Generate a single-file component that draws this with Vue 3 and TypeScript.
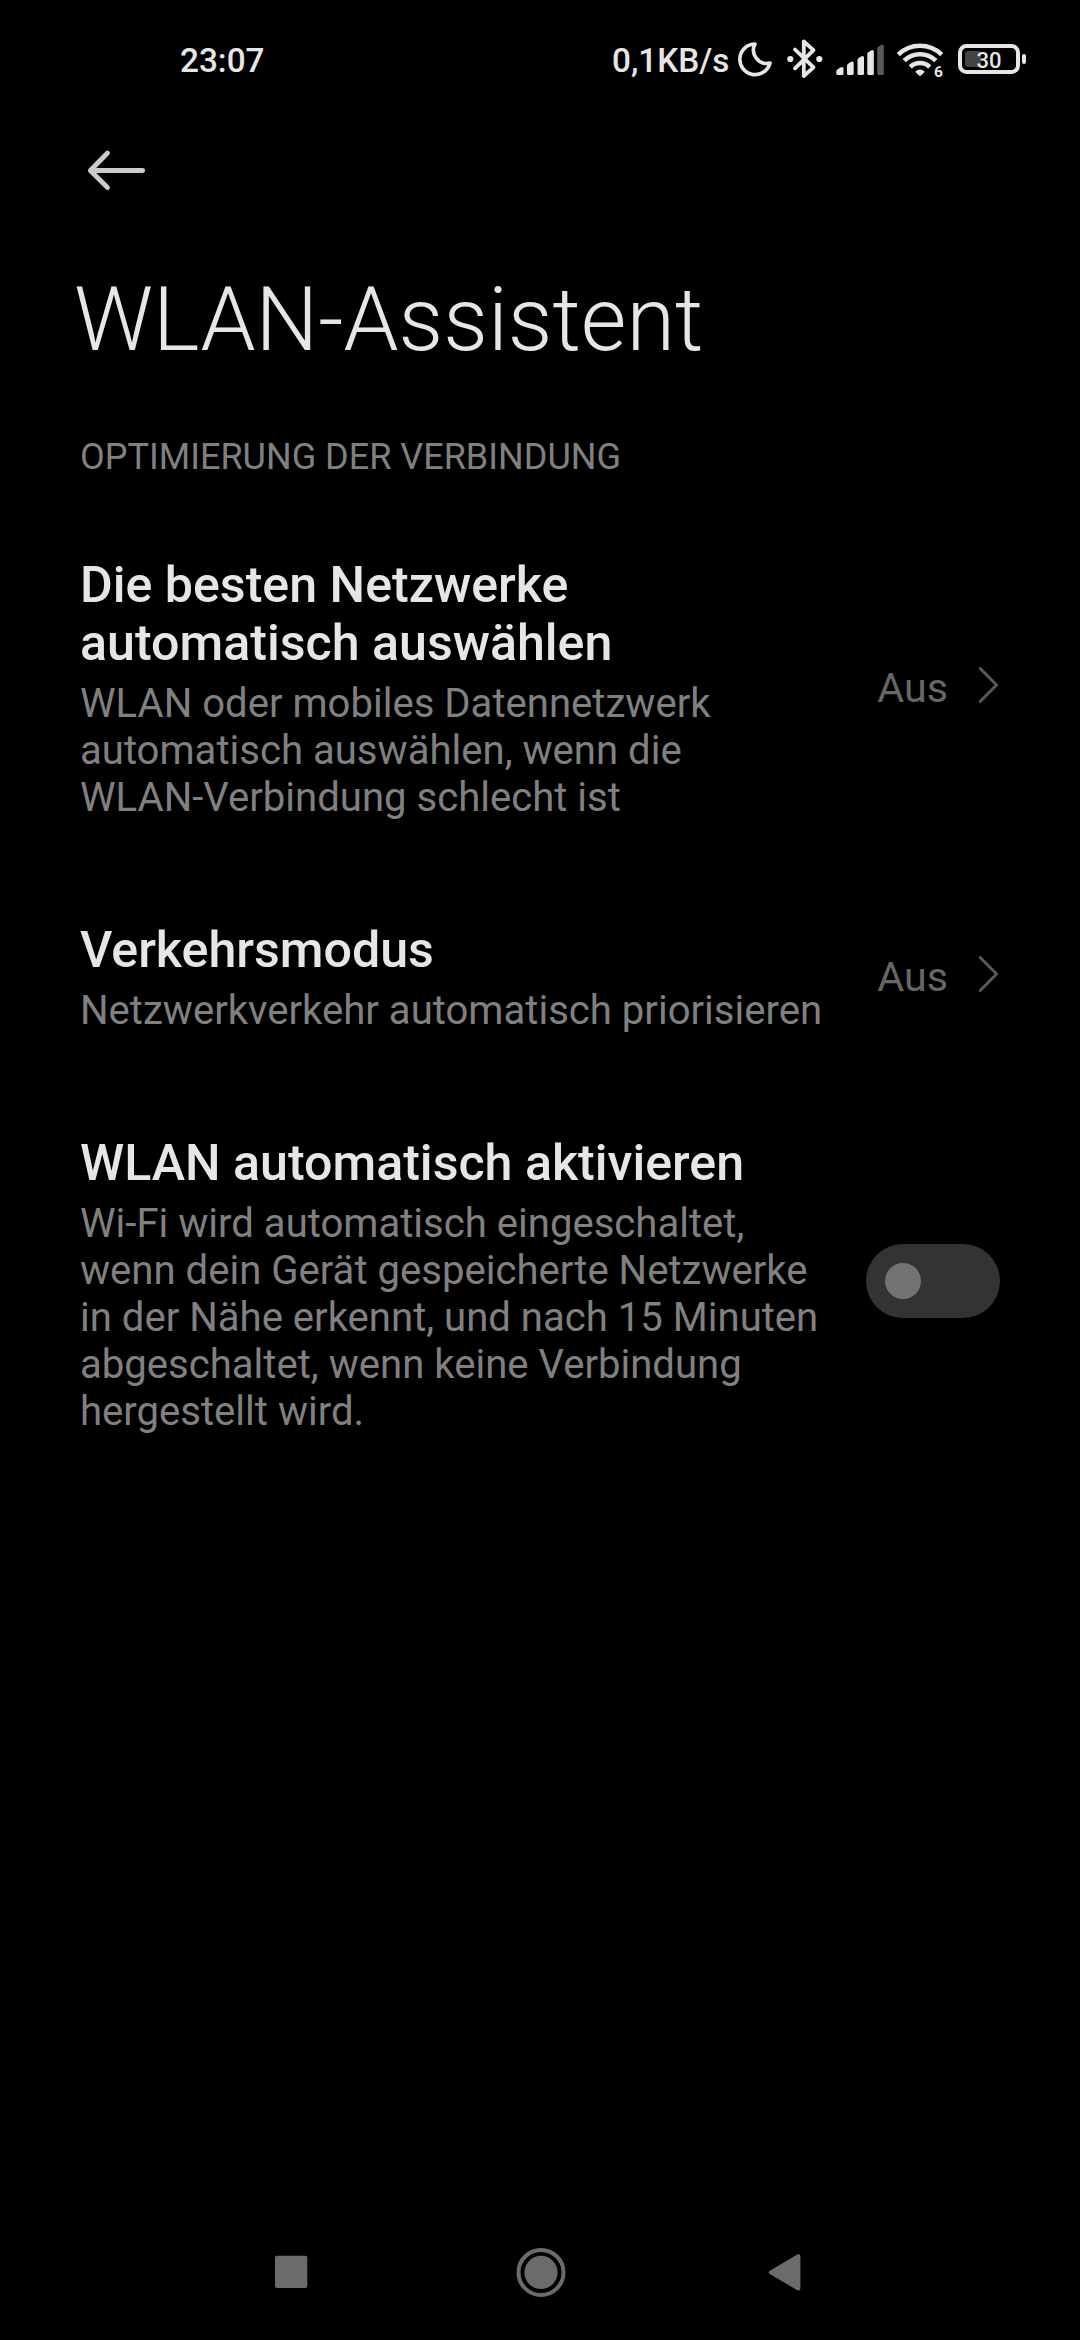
<script setup lang="ts">
interface Setting {
  id: string
  title: string[]
  summary: string[]
  value?: string
}

const settings: Setting[] = [
  {
    id: 'networks',
    title: ['Die besten Netzwerke', 'automatisch auswählen'],
    summary: [
      'WLAN oder mobiles Datennetzwerk',
      'automatisch auswählen, wenn die',
      'WLAN-Verbindung schlecht ist',
    ],
    value: 'Aus',
  },
  {
    id: 'traffic',
    title: ['Verkehrsmodus'],
    summary: ['Netzwerkverkehr automatisch priorisieren'],
    value: 'Aus',
  },
  {
    id: 'auto-enable',
    title: ['WLAN automatisch aktivieren'],
    summary: [
      'Wi-Fi wird automatisch eingeschaltet,',
      'wenn dein Gerät gespeicherte Netzwerke',
      'in der Nähe erkennt, und nach 15 Minuten',
      'abgeschaltet, wenn keine Verbindung',
      'hergestellt wird.',
    ],
  },
]
</script>

<template>
  <div class="screen">
    <div class="status">
      <span class="clock">23:07</span>
      <div class="indicators">
        <span class="speed">0,1KB/s</span>
        <svg width="50" height="60" viewBox="732 30 50 60">
          <path d="M755 44A15.3 15.3 0 1 0 770 63A13.3 13.3 0 0 1 755 44Z" fill="none" stroke="#e6e6e6" stroke-width="3.6" stroke-linejoin="round" />
        </svg>
        <svg width="50" height="60" viewBox="782 30 50 60">
          <path d="M795 49.5L813.5 67.3L803.8 76V41.5L813.5 50.2L795 68.3" fill="none" stroke="#e6e6e6" stroke-width="3.8" stroke-linejoin="round" stroke-linecap="round" />
          <circle cx="790.3" cy="59" r="3.1" fill="#e6e6e6" />
          <circle cx="819.3" cy="59" r="3.1" fill="#e6e6e6" />
        </svg>
        <svg width="60" height="60" viewBox="832 30 60 60">
          <g fill="#e6e6e6">
            <path d="M836.3 73.5V71.5Q836.3 70.5 837.3 69.6L840.3 67.4Q841 67 842 67Q843.5 67 843.5 68.5V73.5Q843.5 75 842 75H837.8Q836.3 75 836.3 73.5Z" />
            <path d="M847 73.5V65.5Q847 64.6 847.9 64L850.6 62Q851.3 61.6 852.2 61.6Q853.7 61.6 853.7 63V73.5Q853.7 75 852.2 75H848.5Q847 75 847 73.5Z" />
            <path d="M857.5 73.5V60Q857.5 59 858.4 58.3L861 56.4Q861.7 56 862.5 56Q864 56 864 57.5V73.5Q864 75 862.5 75H859Q857.5 75 857.5 73.5Z" />
            <path d="M867.3 73.5V54Q867.3 53 868.2 52.3L871 50.4Q871.7 50 872.3 50Q873.8 50 873.8 51.5V73.5Q873.8 75 872.3 75H868.8Q867.3 75 867.3 73.5Z" />
          </g>
          <path d="M877.3 73.5V48.5Q877.3 47.5 878.2 46.8L881 44.9Q881.7 44.5 882.3 44.5Q883.8 44.5 883.8 46V73.5Q883.8 75 882.3 75H878.8Q877.3 75 877.3 73.5Z" fill="#595959" />
        </svg>
        <svg width="60" height="60" viewBox="892 30 60 60">
          <g fill="none" stroke="#e6e6e6" stroke-width="4.6">
            <path d="M898.3 54.6A31 31 0 0 1 941.7 54.6" />
            <path d="M904.2 60.7A22.5 22.5 0 0 1 935.8 60.7" />
            <path d="M910.3 67A13.8 13.8 0 0 1 929.7 67" />
          </g>
          <path d="M915.2 71.8Q920 67 924.8 71.8L921 75.6Q920 76.5 919 75.6Z" fill="#e6e6e6" />
          <text x="934" y="76.6" class="wifi-gen">6</text>
        </svg>
        <svg width="84" height="60" viewBox="952 30 84 60">
          <rect x="960" y="46" width="58" height="26" rx="6.5" fill="none" stroke="#e6e6e6" stroke-width="4" />
          <rect x="965" y="51" width="16" height="16" rx="3" fill="#444" />
          <rect x="1022" y="54" width="4" height="10" rx="2" fill="#e6e6e6" />
          <text x="976.5" y="67.5" class="level">30</text>
        </svg>
      </div>
    </div>

    <header class="header">
      <svg class="back" width="60" height="42" viewBox="86 149 60 42">
        <path d="M142.7 170.5H91M107.5 153L90.3 170.5L107.5 187.5" fill="none" stroke="#cbcbcb" stroke-width="4.8" stroke-linecap="round" stroke-linejoin="round" />
      </svg>
      <h1>WLAN-Assistent</h1>
    </header>

    <main>
      <h2>OPTIMIERUNG DER VERBINDUNG</h2>
      <section v-for="item in settings" :key="item.id" class="item">
        <div class="copy">
          <div class="title">
            <div v-for="line in item.title" :key="line">{{ line }}</div>
          </div>
          <div class="summary">
            <div v-for="line in item.summary" :key="line">{{ line }}</div>
          </div>
        </div>
        <div v-if="item.value" class="value">
          <span>{{ item.value }}</span>
          <svg width="22" height="40" viewBox="0 0 22 40">
            <path d="M2.2 3.5L18.6 20L2.2 36.5" fill="none" stroke="#595959" stroke-width="3" stroke-linecap="round" stroke-linejoin="round" />
          </svg>
        </div>
        <div v-else class="switch"><div class="knob"></div></div>
      </section>
    </main>

    <nav class="nav">
      <svg width="56" height="52" viewBox="0 0 56 52">
        <rect x="12" y="9.7" width="32.3" height="32.3" rx="2" fill="#6b6b6b" />
      </svg>
      <svg width="56" height="52" viewBox="0 0 56 52">
        <circle cx="30" cy="26.4" r="22.5" fill="none" stroke="#6b6b6b" stroke-width="4" />
        <circle cx="30" cy="26.4" r="16.6" fill="#6b6b6b" />
      </svg>
      <svg width="56" height="52" viewBox="0 0 56 52">
        <path d="M12.8 26.4L40.4 10.2V42.6Z" fill="#6b6b6b" stroke="#6b6b6b" stroke-width="4" stroke-linejoin="round" />
      </svg>
    </nav>
  </div>
</template>

<style>
body {
  background: #000;
}
</style>

<style scoped>
.screen {
  width: 1080px;
  height: 2340px;
  display: flex;
  flex-direction: column;
  background: #000;
  color: #e6e6e6;
  font-family: Roboto, sans-serif;
  overflow: hidden;
  box-sizing: border-box;
}

.status {
  height: 119px;
  box-sizing: border-box;
  padding: 30px 44px 0 180px;
  display: flex;
  justify-content: space-between;
  font-size: 33.3px;
  line-height: 62px;
  font-weight: 500;
}

.indicators {
  display: flex;
}

.indicators svg {
  display: block;
  flex: none;
}

.speed {
  width: 120px;
  white-space: nowrap;
}

.wifi-gen {
  font-size: 15.5px;
  font-weight: 700;
  fill: #e6e6e6;
}

.level {
  font-size: 22px;
  font-weight: 500;
  fill: #e6e6e6;
}

.header {
  padding: 30px 74px 0;
}

.back {
  display: block;
  margin-left: 12px;
}

h1 {
  margin: 77px 0 0;
  font-size: 88.2px;
  line-height: 105px;
  font-weight: 300;
  white-space: nowrap;
}

main {
  flex: 1;
  padding: 63px 80px 0;
}

h2 {
  margin: 0 0 78px;
  font-size: 36px;
  line-height: 42px;
  font-weight: 400;
  color: #808080;
}

.item {
  display: flex;
  align-items: center;
  justify-content: space-between;
  margin-bottom: 100px;
}

.copy {
  white-space: nowrap;
}

.title {
  font-size: 50.15px;
  line-height: 58px;
  font-weight: 500;
}

.summary {
  margin-top: 8px;
  font-size: 40.1px;
  line-height: 47px;
  color: #808080;
}

.value {
  display: flex;
  align-items: center;
  gap: 30px;
  padding-bottom: 2px;
  font-size: 41.25px;
  line-height: 48px;
  color: #666;
}

.value svg {
  display: block;
  margin-bottom: 5px;
}

.switch {
  width: 134px;
  height: 74px;
  margin-bottom: 7px;
  border-radius: 37px;
  background: #333;
  box-sizing: border-box;
  padding: 19px;
}

.knob {
  width: 36px;
  height: 36px;
  border-radius: 50%;
  background: #737373;
}

.nav {
  height: 94px;
  padding: 0 266px 0 263px;
  display: flex;
  justify-content: space-between;
}

.nav svg {
  display: block;
}
</style>
